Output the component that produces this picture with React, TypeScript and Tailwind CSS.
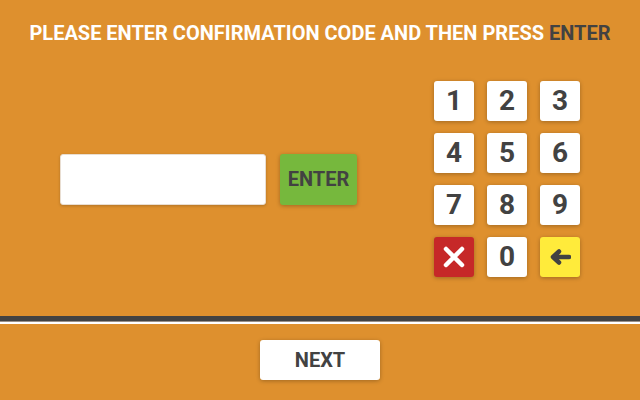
import { useState } from 'react'

const keys = ['1', '2', '3', '4', '5', '6', '7', '8', '9']

function ClearIcon() {
  return (
    <svg width="22" height="22" viewBox="0 0 22 22" fill="none">
      <path d="M3 3L19 19M19 3L3 19" stroke="#ffffff" strokeWidth="4.5" strokeLinecap="round" />
    </svg>
  )
}

function BackIcon() {
  return (
    <svg width="22" height="16" viewBox="0 0 22 16" fill="none">
      <path d="M20 8H5M10 2.5L4 8L10 13.5" stroke="#424242" strokeWidth="4.5" strokeLinecap="round" strokeLinejoin="round" />
    </svg>
  )
}

export default function App() {
  const [code, setCode] = useState('')

  const keyClass =
    'w-[40px] h-[40px] flex items-center justify-center rounded-[3px] shadow-[0_1px_4px_rgba(0,0,0,0.28)] text-[28px] font-bold text-[#424242] leading-none'

  return (
    <div className="w-[640px] h-[400px] bg-[#de902e] flex flex-col font-['Roboto',sans-serif] overflow-hidden">
      <h1 className="pt-[19px] text-center text-[20px] leading-[28px] font-bold text-white">
        PLEASE ENTER CONFIRMATION CODE AND THEN PRESS <span className="text-[#424242]">ENTER</span>
      </h1>

      <div className="mt-[34px] flex items-center px-[60px]">
        <div className="flex items-center gap-[14px]">
          <input
            value={code}
            readOnly
            className="w-[206px] h-[51px] bg-white rounded-[3px] border border-[#e9ded2] shadow-[0_1px_3px_rgba(0,0,0,0.2)] px-3 text-[20px] text-[#424242] outline-none"
          />
          <button className="w-[77px] h-[51px] bg-[#76b83d] rounded-[3px] shadow-[0_1px_4px_rgba(0,0,0,0.28)] text-[20px] font-bold text-[#424242]">
            ENTER
          </button>
        </div>

        <div className="ml-auto grid grid-cols-[40px_40px_40px] gap-x-[13px] gap-y-[12px]">
          {keys.map(k => (
            <button key={k} onClick={() => setCode(code + k)} className={keyClass + ' bg-white'}>
              {k}
            </button>
          ))}
          <button onClick={() => setCode('')} className={keyClass + ' bg-[#c62828]'}>
            <ClearIcon />
          </button>
          <button onClick={() => setCode(code + '0')} className={keyClass + ' bg-white'}>
            0
          </button>
          <button onClick={() => setCode(code.slice(0, -1))} className={keyClass + ' bg-[#ffeb3b]'}>
            <BackIcon />
          </button>
        </div>
      </div>

      <div className="mt-[39px] h-[5px] bg-[#424242]" />
      <div className="h-px bg-[#9a9189]" />
      <div className="h-[2px] bg-white" />

      <div className="mt-[16px] flex justify-center">
        <button className="w-[120px] h-[40px] bg-white rounded-[3px] shadow-[0_1px_4px_rgba(0,0,0,0.28)] text-[20px] font-bold text-[#424242]">
          NEXT
        </button>
      </div>
    </div>
  )
}
